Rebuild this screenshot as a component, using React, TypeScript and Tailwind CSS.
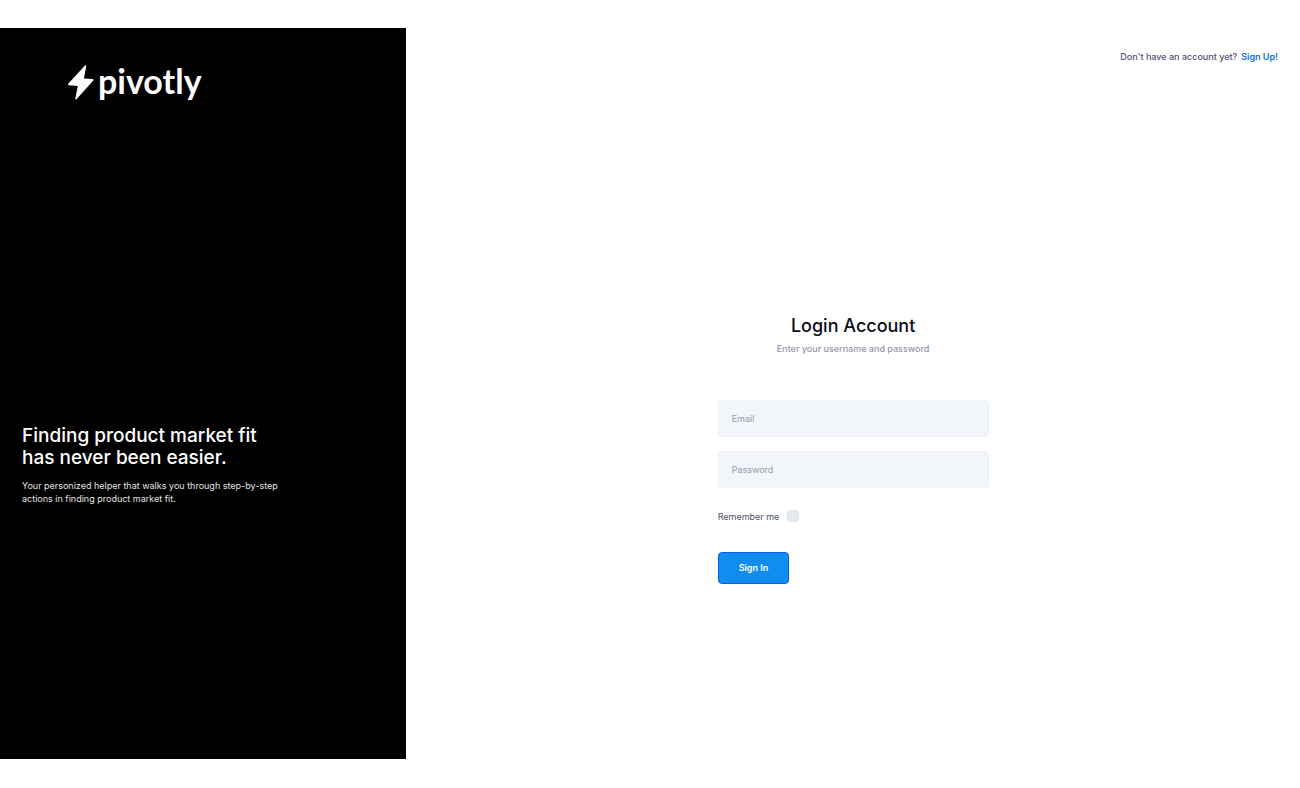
import { useState } from 'react';

function Logo() {
  return (
    <a href="#" className="flex h-[35px] items-start gap-1 text-[#fcfcfc]">
      <svg viewBox="0 0 26 35" className="h-[35px] w-[26px]" fill="currentColor" aria-hidden="true">
        <path d="M17 .5c.6-.6 1.400-.2 1.200.7L16 13.400l8.700.7c.9.1 1.100.8.600 1.400L8.500 34.200c-.6.6-1.400.2-1.200-.7l2.500-12.600-8.900-.7c-.9-.1-1.200-1-.5-1.700Z" />
      </svg>
      <span className="font-['Lato',sans-serif] text-[34px] leading-[32px] font-bold">pivotly</span>
    </a>
  );
}

function Intro() {
  return (
    <aside className="flex w-[31.25%] flex-col bg-black px-[22px] text-white">
      <div className="mb-[70px] pt-[37px] pl-[46px]">
        <Logo />
      </div>
      <div className="flex flex-1 flex-col justify-center">
        <h1 className="text-[19px] leading-[22px] font-medium">
          Finding product market fit
          <br />
          has never been easier.
        </h1>
        <p className="mt-[10px] text-[9px] leading-[13px] text-[#e4e4e4]">
          Your personized helper that walks you through step-by-step
          <br />
          actions in finding product market fit.
        </p>
      </div>
    </aside>
  );
}

const fieldClass =
  'h-[37px] w-full rounded border border-[#edf1f6] bg-[#f2f5f9] px-[13px] text-[9px] text-[#595d6e] outline-none placeholder:text-[#9699ae] focus:border-[#118df0]';

function LoginForm() {
  const [email, setEmail] = useState('');
  const [password, setPassword] = useState('');
  const [remember, setRemember] = useState(false);

  return (
    <form className="w-full max-w-[271px]" onSubmit={(e) => e.preventDefault()}>
      <div className="text-center">
        <h2 className="text-[18px] leading-6 font-medium text-[#0c0c1b]">Login Account</h2>
        <p className="mt-1 text-[9px] leading-[13px] font-medium text-[#9496ad]">
          Enter your username and password
        </p>
      </div>

      <div className="mt-[45px] flex flex-col gap-[14px]">
        <input
          type="email"
          aria-label="Email"
          placeholder="Email"
          className={fieldClass}
          value={email}
          onChange={(e) => setEmail(e.target.value)}
        />
        <input
          type="password"
          aria-label="Password"
          placeholder="Password"
          className={fieldClass}
          value={password}
          onChange={(e) => setPassword(e.target.value)}
        />
      </div>

      <label className="mt-[22px] flex w-fit items-center gap-2 text-[9px] leading-[13px] text-[#4d5068]">
        Remember me
        <input
          type="checkbox"
          className="size-3 appearance-none rounded border border-[#dfe2eb] bg-[#e8ebf3] checked:bg-[#118df0]"
          checked={remember}
          onChange={(e) => setRemember(e.target.checked)}
        />
      </label>

      <button
        type="submit"
        className="mt-[29px] h-8 rounded border border-[#005fe5] bg-[#118df0] px-5 text-[9px] font-semibold text-white hover:bg-[#0f80dc]"
      >
        Sign In
      </button>
    </form>
  );
}

export default function App() {
  return (
    <div className="flex min-h-screen bg-white pt-7 pb-[29px] font-['Inter',sans-serif]">
      <Intro />
      <main className="flex flex-1 flex-col px-[22px]">
        <div className="flex h-[110px] justify-end gap-1 pt-[22px] text-[9px] leading-[13px] font-medium">
          <span className="text-[#4d5075]">Don't have an account yet?</span>
          <a href="#" className="font-semibold text-[#0a6fe0] hover:underline">
            Sign Up!
          </a>
        </div>
        <div className="flex flex-1 items-center justify-center">
          <LoginForm />
        </div>
      </main>
    </div>
  );
}
